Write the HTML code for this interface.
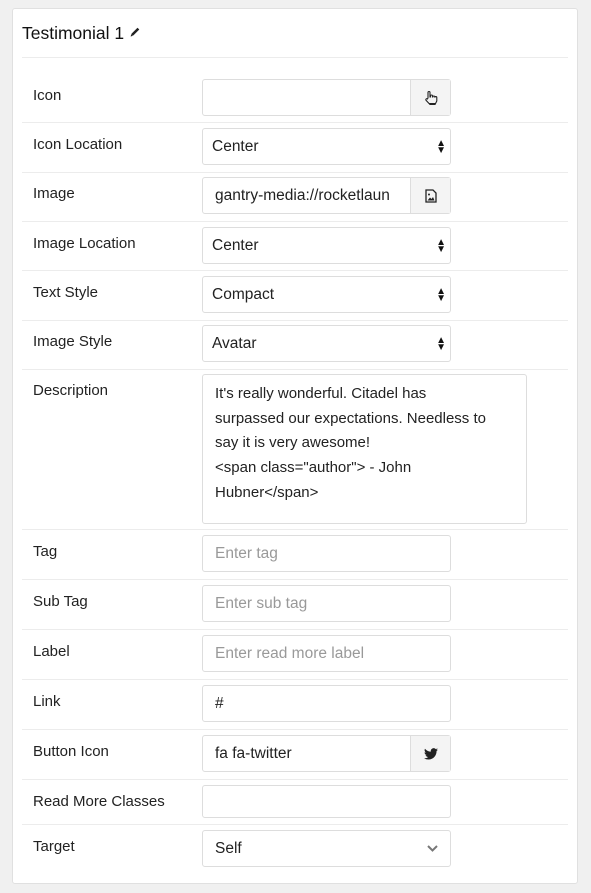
<!DOCTYPE html><html><head><style>
body{margin:0;width:591px;height:893px;background:#f0f0f0;font-family:"Liberation Sans",sans-serif;position:relative;overflow:hidden}
.panel{position:absolute;left:12px;top:8px;width:566px;height:876px;background:#fff;border:1px solid #e0e0e0;border-radius:3px;box-sizing:border-box}
.t{position:absolute;left:22px;top:23px;font-size:17.5px;color:#111}
.sep{position:absolute;left:22px;width:546px;height:1px;background:#ececec}
.lb{position:absolute;left:33px;font-size:15px;color:#222;line-height:18px}
.in{position:absolute;left:202px;width:249px;height:37px;border:1px solid #ddd;border-radius:3px;box-sizing:border-box;font-size:15.5px;color:#222;line-height:35px;padding-left:12px;background:#fff}
.sel{padding-left:9px}
.ph{color:#999}
.ad{position:absolute;right:0;top:0;width:39px;height:35px;background:#f4f4f4;border-left:1px solid #ddd;display:flex;align-items:center;justify-content:center}
.ar{position:absolute;right:4px;top:11px;font-size:10px;line-height:7px;color:#111}
.ta{position:absolute;left:202px;top:374px;width:325px;height:150px;border:1px solid #ddd;border-radius:3px;box-sizing:border-box;font-size:15px;color:#222;line-height:24.7px;padding:7px 12px;white-space:nowrap}
</style></head><body>
<div class="panel"></div>
<div class="t">Testimonial 1 <svg width="12" height="12" viewBox="0 0 12 12" style="vertical-align:1px"><path d="M2 10l.6-2.4L8.5 1.7l1.8 1.8L4.4 9.4z M1.6 10.5l.5-1.8 1.3 1.3z" fill="#222"/></svg></div>
<div class="sep" style="top:57px"></div>
<div class="sep" style="top:122px"></div><div class="sep" style="top:172px"></div><div class="sep" style="top:221px"></div><div class="sep" style="top:270px"></div><div class="sep" style="top:320px"></div><div class="sep" style="top:369px"></div><div class="sep" style="top:529px"></div><div class="sep" style="top:579px"></div><div class="sep" style="top:629px"></div><div class="sep" style="top:679px"></div><div class="sep" style="top:729px"></div><div class="sep" style="top:779px"></div><div class="sep" style="top:824px"></div>

<div class="lb" style="top:87px">Icon</div>
<div class="in" style="top:79px"><div class="ad"><svg width="16" height="16" viewBox="0 0 16 16"><path d="M5 8V2.5a1 1 0 0 1 2 0V7h.5V6a1 1 0 0 1 2 0v1h.3a1 1 0 0 1 2 0v.6a1 1 0 0 1 2 0V11l-1.5 3H6.5L3 10.3a1 1 0 0 1 1.4-1.4z" fill="none" stroke="#222" stroke-width="1.1"/><rect x="6.5" y="13" width="6" height="2" fill="#222"/></svg></div></div>
<div class="lb" style="top:136px">Icon Location</div>
<div class="in sel" style="top:128px">Center<div class="ar">▲<br>▼</div></div>
<div class="lb" style="top:185px">Image</div>
<div class="in" style="top:177px">gantry-media://rocketlaun<div class="ad"><svg width="12" height="14" viewBox="0 0 12 14"><path d="M1 1h7l3 3v9H1z" fill="none" stroke="#222" stroke-width="1.3"/><path d="M2.5 11.5l2.5-3 1.5 1.5 1.5-2 1.5 3.5z" fill="#222"/><circle cx="4" cy="5.5" r="1" fill="#222"/></svg></div></div>
<div class="lb" style="top:235px">Image Location</div>
<div class="in sel" style="top:227px">Center<div class="ar">▲<br>▼</div></div>
<div class="lb" style="top:284px">Text Style</div>
<div class="in sel" style="top:276px">Compact<div class="ar">▲<br>▼</div></div>
<div class="lb" style="top:333px">Image Style</div>
<div class="in sel" style="top:325px">Avatar<div class="ar">▲<br>▼</div></div>
<div class="lb" style="top:382px">Description</div>
<div class="ta">It's really wonderful. Citadel has<br>surpassed our expectations. Needless to<br>say it is very awesome!<br>&lt;span class="author"&gt; - John<br>Hubner&lt;/span&gt;</div>
<div class="lb" style="top:543px">Tag</div>
<div class="in" style="top:535px"><span class="ph">Enter tag</span></div>
<div class="lb" style="top:593px">Sub Tag</div>
<div class="in" style="top:585px"><span class="ph">Enter sub tag</span></div>
<div class="lb" style="top:643px">Label</div>
<div class="in" style="top:635px"><span class="ph">Enter read more label</span></div>
<div class="lb" style="top:693px">Link</div>
<div class="in" style="top:685px">#</div>
<div class="lb" style="top:743px">Button Icon</div>
<div class="in" style="top:735px">fa fa-twitter<div class="ad"><svg width="14" height="12" viewBox="0 0 24 20"><path d="M24 2.4a10 10 0 0 1-2.8.8A5 5 0 0 0 23.3.4a10 10 0 0 1-3.1 1.2A4.9 4.9 0 0 0 11.8 6 14 14 0 0 1 1.7.9a4.9 4.9 0 0 0 1.5 6.6 5 5 0 0 1-2.2-.6 4.9 4.9 0 0 0 3.9 4.8 5 5 0 0 1-2.2.1 4.9 4.9 0 0 0 4.6 3.4A9.9 9.9 0 0 1 0 17.3 14 14 0 0 0 7.5 19.5c9 0 14-7.5 14-14v-.6A10 10 0 0 0 24 2.4z" fill="#222"/></svg></div></div>
<div class="lb" style="top:793px">Read More Classes</div>
<div class="in" style="top:785px;height:33px"></div>
<div class="lb" style="top:838px">Target</div>
<div class="in" style="top:830px">Self<svg style="position:absolute;right:12px;top:14px" width="11" height="7" viewBox="0 0 11 7"><path d="M1 1l4.5 4.5L10 1" fill="none" stroke="#777" stroke-width="2"/></svg></div>
</body></html>
